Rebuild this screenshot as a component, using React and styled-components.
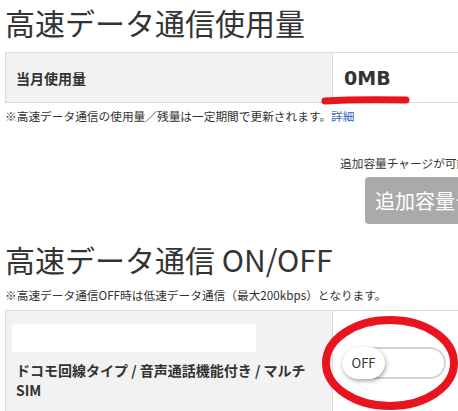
import React from "react";
import styled, { createGlobalStyle } from "styled-components";

const GlobalStyle = createGlobalStyle`
  html, body { margin: 0; padding: 0; overflow: hidden; background: #fff; }
  body {
    font-family: "Noto Sans CJK JP", "Noto Sans", sans-serif;
    color: #333;
  }
`;

const Page = styled.div`
  position: relative;
  width: 640px;
  padding: 0 5px;
`;

const Heading = styled.h2`
  margin: ${(p) => p.$top}px 0 0;
  font-size: 30px;
  font-weight: 400;
  line-height: 36px;
  color: #333;
  white-space: nowrap;
`;

const Table = styled.div`
  display: grid;
  grid-template-columns: 327px 1fr;
  border: 1px solid #dcdcdc;
  margin-top: ${(p) => p.$top}px;
`;

const LabelCell = styled.div`
  background: #f2f2f2;
  border-right: 1px solid #dcdcdc;
  display: flex;
  flex-direction: column;
  justify-content: center;
  padding: ${(p) => p.$pad};
  min-height: ${(p) => p.$min || 0}px;
  box-sizing: border-box;
`;

const LabelText = styled.span`
  font-size: 14px;
  font-weight: 700;
  line-height: 20px;
  color: #333;
  padding-left: ${(p) => p.$indent || 0}px;
`;

const ValueCell = styled.div`
  display: flex;
  align-items: center;
  padding-left: ${(p) => p.$left}px;
`;

const Amount = styled.span`
  font-family: "DejaVu Sans", "Noto Sans", sans-serif;
  font-size: 19px;
  font-weight: 700;
  color: #333;
`;

const Note = styled.p`
  margin: ${(p) => p.$top}px 0 0;
  font-size: 11.7px;
  line-height: 18px;
  color: #333;
  white-space: nowrap;
`;

const Link = styled.a`
  color: #3366bb;
  text-decoration: none;
`;

const ChargeArea = styled.div`
  display: flex;
  flex-direction: column;
  align-items: flex-start;
  padding-left: 335px;
  margin-top: 29px;
`;

const ChargeText = styled.span`
  font-size: 11.7px;
  line-height: 18px;
  white-space: nowrap;
`;

const ChargeButton = styled.button`
  margin: 5px 0 0 25px;
  width: 220px;
  height: 47px;
  border: none;
  border-radius: 4px;
  background: #aaaaaa;
  color: #fff;
  font-family: "Noto Sans CJK JP", sans-serif;
  font-size: 20px;
  text-align: left;
  padding: 0 10px;
  white-space: nowrap;
`;

const BlankBar = styled.div`
  width: 244px;
  height: 28px;
  background: #fff;
  margin-bottom: 8px;
`;

const Toggle = styled.div`
  position: relative;
  width: 104px;
  height: 32px;
  box-sizing: border-box;
  border: 2px solid #d4d4d4;
  border-radius: 16px;
  background: #fff;
`;

const Knob = styled.div`
  position: absolute;
  left: -2px;
  top: -2px;
  width: 43px;
  height: 32px;
  border-radius: 16px;
  background: #fff;
  box-shadow: 1px 2px 4px rgba(0, 0, 0, 0.35);
  display: flex;
  align-items: center;
  justify-content: center;
  font-size: 13px;
  color: #333;
`;

const Mark = styled.svg`
  position: absolute;
  left: ${(p) => p.$x}px;
  top: ${(p) => p.$y}px;
  overflow: visible;
  pointer-events: none;
`;

export default function App() {
  return (
    <>
      <GlobalStyle />
      <Page>
        <Heading $top={4}>高速データ通信使用量</Heading>
        <Table $top={12}>
          <LabelCell $pad="0 10px" $min={49}>
            <LabelText>当月使用量</LabelText>
          </LabelCell>
          <ValueCell $left={11}>
            <Amount>0MB</Amount>
          </ValueCell>
        </Table>
        <Note $top={4}>
          ※高速データ通信の使用量／残量は一定期間で更新されます。<Link href="#">詳細</Link>
        </Note>
        <ChargeArea>
          <ChargeText>追加容量チャージが可能です。</ChargeText>
          <ChargeButton>追加容量チャージ</ChargeButton>
        </ChargeArea>
        <Heading $top={17}>高速データ通信 ON/OFF</Heading>
        <Note $top={9}>※高速データ通信OFF時は低速データ通信（最大200kbps）となります。</Note>
        <Table $top={6}>
          <LabelCell $pad="13px 12px 14px 6px">
            <BlankBar />
            <LabelText $indent={4}>ドコモ回線タイプ / 音声通話機能付き / マルチ SIM</LabelText>
          </LabelCell>
          <ValueCell $left={9}>
            <Toggle>
              <Knob>OFF</Knob>
            </Toggle>
          </ValueCell>
        </Table>
        <Mark $x={318} $y={88} width="100" height="16">
          <path d="M7 9 C 30 7.5, 60 7.5, 88 8" stroke="#e8141e" strokeWidth="7" strokeLinecap="round" fill="none" />
        </Mark>
        <Mark $x={318} $y={308} width="150" height="110">
          <ellipse cx="72" cy="51" rx="64" ry="43" stroke="#e8141e" strokeWidth="8" fill="none" />
        </Mark>
      </Page>
    </>
  );
}
